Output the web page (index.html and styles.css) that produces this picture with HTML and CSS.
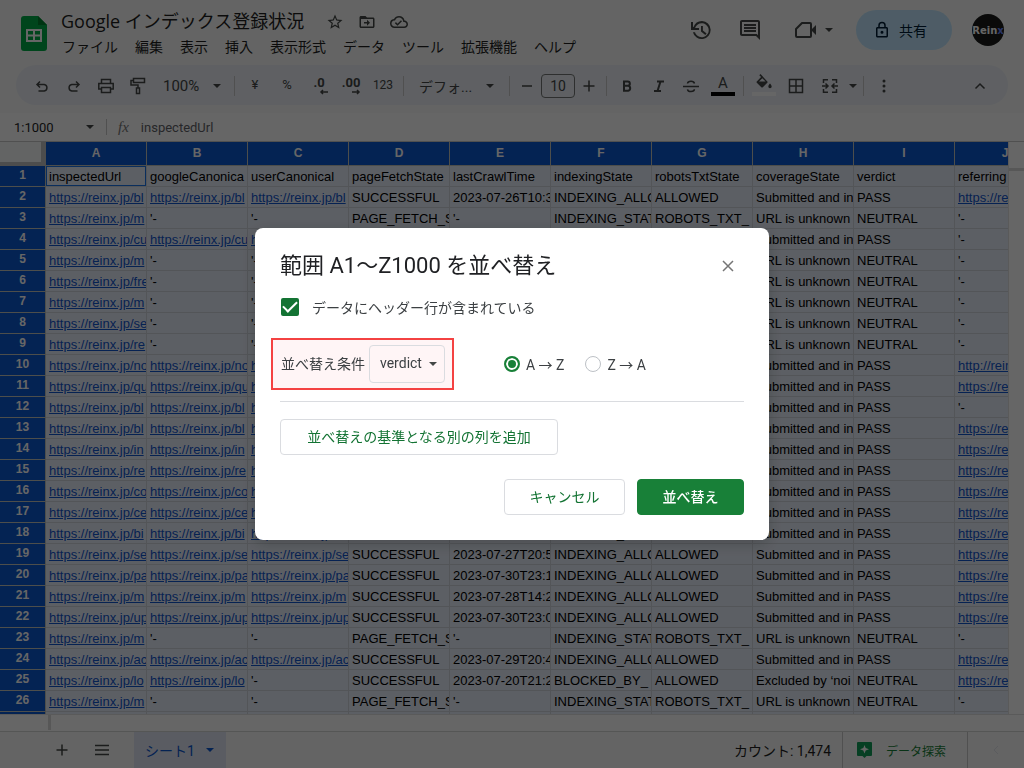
FILE: index.html
```html
<!DOCTYPE html>
<html lang="ja">
<head>
<meta charset="utf-8">
<meta name="viewport" content="width=device-width, initial-scale=1">
<title>Google インデックス登録状況</title>
<link rel="stylesheet" href="styles.css">
</head>
<body>
<div class="app">
  <header class="header">
    <svg class="logo" viewBox="0 0 26 35"><path fill="#00ac47" d="M3 0h14l9 9v23a3 3 0 0 1-3 3H3a3 3 0 0 1-3-3V3a3 3 0 0 1 3-3z"/><path fill="#00832d" d="M17 0l9 9h-9z"/><path fill="#fff" fill-rule="evenodd" d="M5 13h16v13H5zM7 15v3.500h5V15zM14 15v3.500h5V15zM7 20.500V24h5v-3.500zM14 20.500V24h5v-3.500z"/></svg>
    <div class="doc">
      <div class="doc-row">
        <h1 class="doc-title">Google インデックス登録状況</h1>
        <div class="doc-icons">
          <button class="mini" aria-label="スター"><svg viewBox="0 0 24 24"><path d="M22 9.240l-7.190-.620L12 2 9.190 8.630 2 9.240l5.460 4.730L5.820 21 12 17.270 18.180 21l-1.630-7.030L22 9.240zM12 15.400l-3.760 2.270 1-4.280-3.320-2.880 4.380-.380L12 6.100l1.710 4.040 4.380.380-3.320 2.880 1 4.280L12 15.400z"/></svg></button>
          <button class="mini" aria-label="移動"><svg viewBox="0 0 24 24"><path d="M20 6h-8l-2-2H4c-1.100 0-2 .9-2 2v12c0 1.100.9 2 2 2h16c1.100 0 2-.9 2-2V8c0-1.100-.9-2-2-2zm0 12H4V8h16v10zm-8-1l4-4-4-4v3H8v2h4z"/></svg></button>
          <button class="mini" aria-label="保存状況"><svg viewBox="0 0 24 24"><path d="M19.350 10.040A7.490 7.490 0 0 0 12 4C9.110 4 6.600 5.640 5.350 8.040A5.994 5.994 0 0 0 0 14c0 3.310 2.690 6 6 6h13c2.760 0 5-2.240 5-5 0-2.640-2.050-4.780-4.650-4.960zM19 18H6c-2.210 0-4-1.790-4-4 0-2.050 1.530-3.760 3.560-3.970l1.070-.110.5-.950A5.469 5.469 0 0 1 12 6c2.620 0 4.880 1.860 5.390 4.430l.3 1.500 1.530.110A2.980 2.980 0 0 1 22 15c0 1.650-1.350 3-3 3zM10 14.200l-2.100-2.100-1.400 1.400L10 17l6-6-1.400-1.400z"/></svg></button>
        </div>
      </div>
      <nav class="menus">
        <button>ファイル</button><button>編集</button><button>表示</button><button>挿入</button><button>表示形式</button><button>データ</button><button>ツール</button><button>拡張機能</button><button>ヘルプ</button>
      </nav>
    </div>
    <div class="actions">
      <button class="big" aria-label="変更履歴"><svg viewBox="0 0 24 24"><path d="M13 3a9 9 0 0 0-8.500 6H4V4H2v8h8v-2H6.100A7 7 0 1 1 6 14.200H3.900A9 9 0 1 0 13 3zm-1 5v5.400l4.300 3.600 1.300-1.500-3.700-3V8z"/></svg></button>
      <button class="big" aria-label="コメント"><svg viewBox="0 0 24 24"><path d="M21.990 4c0-1.100-.890-2-1.990-2H4c-1.100 0-2 .9-2 2v12c0 1.100.9 2 2 2h14l4 4-.010-18zM20 4v13.170L18.830 16H4V4h16zM6 12h12v2H6zm0-3h12v2H6zm0-3h12v2H6z"/></svg></button>
      <button class="meet" aria-label="通話"><svg class="camera" viewBox="0 0 24 20"><path fill="none" stroke="#444746" stroke-width="2" stroke-linejoin="round" d="M8 3h8a1 1 0 0 1 1 1v12a1 1 0 0 1-1 1H3a1 1 0 0 1-1-1V9z"/><path d="M17 10l5-5v10z"/></svg><span class="caret"></span></button>
      <button class="share"><svg viewBox="0 0 24 24"><path d="M18 8h-1V6A5 5 0 0 0 7 6v2H6c-1.100 0-2 .9-2 2v10c0 1.100.9 2 2 2h12c1.100 0 2-.9 2-2V10c0-1.100-.9-2-2-2zM9 6a3 3 0 0 1 6 0v2H9zm9 14H6V10h12zm-6-3a2 2 0 1 0 0-4 2 2 0 0 0 0 4z"/></svg>共有</button>
      <button class="avatar" aria-label="アカウント">Rein<b>x</b></button>
    </div>
  </header>

  <div class="toolbar" role="toolbar">
    <button class="tool" aria-label="元に戻す"><svg viewBox="0 0 18 18"><path class="line" d="M7 4.500L4 7.500l3 3M4 7.500h7.200a3.300 3.300 0 0 1 0 6.500H5.500"/></svg></button>
    <button class="tool" aria-label="やり直し"><svg viewBox="0 0 18 18"><path class="line" d="M11 4.500l3 3-3 3M14 7.500H6.800a3.300 3.300 0 0 0 0 6.500h5.700"/></svg></button>
    <button class="tool" aria-label="印刷"><svg viewBox="0 0 18 18"><path class="line" d="M4.500 6V2.500h9V6M4.500 12H1.800V6.500h14.400V12h-2.700M4.500 10.500h9v5h-9z"/></svg></button>
    <button class="tool" aria-label="書式を貼り付け"><svg viewBox="0 0 18 18"><path class="line" d="M4.500 1.500h11v4h-11zM4.500 3.500H2V8h7v3M7.500 11h3v5.500h-3z"/></svg></button>
    <button class="zoom">100%<span class="caret"></span></button>
    <span class="sep"></span>
    <button class="tool num">¥</button>
    <button class="tool num">%</button>
    <button class="tool decimal" aria-label="小数点以下の桁数を減らす"><span>.0</span><svg viewBox="0 0 10 6"><path class="line" d="M9 3H2M4 1L2 3l2 2"/></svg></button>
    <button class="tool decimal" aria-label="小数点以下の桁数を増やす"><span>.00</span><svg viewBox="0 0 10 6"><path class="line" d="M1 3h7M6 1l2 2-2 2"/></svg></button>
    <button class="tool num small">123</button>
    <span class="sep"></span>
    <button class="font">デフォ...<span class="caret"></span></button>
    <span class="sep"></span>
    <button class="step" aria-label="小さく"><svg viewBox="0 0 18 18"><path class="line" d="M4 9h10"/></svg></button>
    <input class="size" aria-label="フォントサイズ" value="10">
    <button class="step" aria-label="大きく"><svg viewBox="0 0 18 18"><path class="line" d="M3.500 9h11M9 3.500v11"/></svg></button>
    <span class="sep"></span>
    <button class="tool" aria-label="太字"><svg viewBox="0 0 18 18"><path fill="none" stroke="#444746" stroke-width="2" d="M6 4.500h3.700a2.100 2.100 0 0 1 0 4.300H6.200h4a2.500 2.500 0 0 1 0 4.900H6V4.500z"/></svg></button>
    <button class="tool" aria-label="斜体"><svg viewBox="0 0 18 18"><path fill="none" stroke="#444746" stroke-width="2" d="M7 4.500h7M4 14h7M10.500 4.500L7.500 14"/></svg></button>
    <button class="tool" aria-label="取り消し線"><svg viewBox="0 0 18 18"><path class="line" d="M1 9.500h16M12.500 6.500c-.3-1.400-1.600-2.200-3.500-2.200s-3.300.8-3.500 2.200M5.500 12.300C5.700 13.800 7 14.500 9 14.500s3.400-.8 3.400-2.200"/></svg></button>
    <button class="tool color">A</button>
    <span class="sep"></span>
    <button class="tool fill" aria-label="塗りつぶしの色"><svg viewBox="0 0 18 18"><path d="M5.500 0L4.300 1.200l1.800 1.800-4.300 4.400a1 1 0 0 0 0 1.400l4.500 4.500c.4.400 1.100.4 1.500 0l4.500-4.500a1 1 0 0 0 0-1.400zM4 7.500l3.300-3.300 3.300 3.300zM15 9.500s-1.700 1.900-1.700 3a1.700 1.700 0 0 0 3.400 0c0-1.100-1.700-3-1.700-3z"/></svg></button>
    <button class="tool" aria-label="枠線"><svg viewBox="0 0 18 18"><path class="line" d="M2.500 2.500h13v13h-13zM9 2.500v13M2.500 9h13"/></svg></button>
    <button class="merge" aria-label="セルを結合"><svg viewBox="0 0 18 18"><path class="line" d="M7 2.800H2.500V6M11 2.800h4.500V6M7 15.200H2.500V12M11 15.200h4.500V12M1 9h5.500M4.500 6.500L7 9l-2.500 2.500M17 9h-5.500M13.500 6.500L11 9l2.500 2.500"/></svg><span class="caret"></span></button>
    <span class="sep"></span>
    <button class="tool" aria-label="その他"><svg viewBox="0 0 18 18"><circle cx="9" cy="4" r="1.500"/><circle cx="9" cy="9" r="1.500"/><circle cx="9" cy="14" r="1.500"/></svg></button>
    <button class="tool last" aria-label="メニューを非表示"><svg viewBox="0 0 18 18"><path class="line" d="M4.500 11.500L9 7l4.500 4.500"/></svg></button>
  </div>

  <div class="formula">
    <button class="range">1:1000<span class="caret"></span></button>
    <span class="sep"></span>
    <span class="fx">fx</span>
    <input class="formula-input" aria-label="数式" value="inspectedUrl">
  </div>

  <main class="sheet">
    <div class="grid-view">
      <table class="grid">
        <colgroup><col class="row-col"><col span="10" class="data-col"></colgroup>
        <thead><tr id="letters"><th class="corner" aria-label="すべて選択"></th></tr></thead>
        <tbody id="rows"></tbody>
      </table>
    </div>
    <div class="v-scroll"></div>
  </main>
  <div class="h-scroll"></div>

  <footer class="footer">
    <button class="foot" aria-label="シートを追加"><svg viewBox="0 0 18 18"><path class="line" d="M3.500 9h11M9 3.500v11"/></svg></button>
    <button class="foot" aria-label="すべてのシート"><svg viewBox="0 0 18 18"><path class="line" d="M2 4.500h14M2 9h14M2 13.500h14"/></svg></button>
    <button class="tab">シート1<span class="caret"></span></button>
    <button class="count">カウント: 1,474</button>
    <button class="explore"><svg viewBox="0 0 16 17"><path fill="#0f9d58" d="M1 0h13a1 1 0 0 1 1 1v12a1 1 0 0 1-1 1H9.500L7.500 16l-2-2H1a1 1 0 0 1-1-1V1a1 1 0 0 1 1-1z"/><path fill="#fff" d="M7.500 3l1.200 3L12 7.200 8.700 8.500l-1.200 3-1.200-3L3 7.200 6.300 6z"/></svg>データ探索</button>
    <button class="panel" aria-label="サイドパネルを表示"><svg viewBox="0 0 18 18"><path d="M11 5L7 9l4 4"/></svg></button>
  </footer>
</div>

<div class="backdrop">
  <section class="dialog" role="dialog" aria-labelledby="dialog-title">
    <div class="dialog-head">
      <h2 class="dialog-title" id="dialog-title">範囲 A1～Z1000 を並べ替え</h2>
      <button class="close" aria-label="閉じる"><svg viewBox="0 0 16 16"><path d="M3 3l10 10M13 3L3 13"/></svg></button>
    </div>
    <label class="check"><input type="checkbox" checked>データにヘッダー行が含まれている</label>
    <div class="criteria">
      <div class="highlight">
        <label for="column">並べ替え条件</label>
        <div class="select"><select id="column"><option>verdict</option></select><span class="caret"></span></div>
      </div>
      <div class="order">
        <label class="radio"><input type="radio" name="order" checked>A → Z</label>
        <label class="radio"><input type="radio" name="order">Z → A</label>
      </div>
    </div>
    <button class="btn add">並べ替えの基準となる別の列を追加</button>
    <div class="buttons">
      <button class="btn cancel">キャンセル</button>
      <button class="btn primary">並べ替え</button>
    </div>
  </section>
</div>
<script src="script.js"></script>
</body>
</html>
```

FILE: styles.css
```css
* { box-sizing: border-box; }

body {
  margin: 0;
  font-family: Roboto, "Noto Sans CJK JP", sans-serif;
  font-size: 14px;
  color: #1f1f1f;
}

button, input, select {
  font: inherit;
  color: inherit;
  border: 0;
  padding: 0;
  margin: 0;
  background: none;
}

svg { display: block; fill: #444746; }
.line { fill: none; stroke: #444746; stroke-width: 1.5; }

.app {
  display: flex;
  flex-direction: column;
  height: 100vh;
  overflow: hidden;
  background: #f9fbf9;
}

.caret {
  width: 0;
  border: 4px solid transparent;
  border-top-color: #444746;
  border-bottom: 0;
}

.sep { width: 1px; height: 20px; background: #c7c7c7; flex: none; }

/* header */
.header { display: flex; flex: none; height: 65px; padding: 0 20px 0 21px; }
.logo { width: 26px; height: 35px; margin-top: 16px; flex: none; }
.doc { margin-left: 14px; padding-top: 8px; }
.doc-row { display: flex; align-items: center; height: 26px; }
.doc-title { margin: 0; font-family: "Open Sans", "Noto Sans CJK JP", sans-serif; font-size: 18px; font-weight: 400; line-height: 26px; white-space: nowrap; }
.doc-icons { display: flex; gap: 14px; margin-left: 22px; padding-top: 2px; }
.mini svg { width: 18px; height: 18px; }
.menus { display: flex; gap: 17px; padding: 3px 0 0 1px; line-height: 20px; white-space: nowrap; }
.actions { display: flex; align-items: center; height: 60px; margin-left: auto; }
.big { margin-right: 25px; }
.big svg { width: 24px; height: 24px; }
.meet { display: flex; align-items: center; gap: 7px; margin: 0 23px 0 7px; }
.camera { width: 24px; height: 20px; }
.share {
  display: flex;
  align-items: center;
  justify-content: center;
  gap: 8px;
  width: 96px;
  height: 40px;
  margin-right: 20px;
  padding-right: 8px;
  border-radius: 20px;
  background: #c2e7ff;
  color: #001d35;
}
.share svg { width: 18px; height: 18px; fill: #001d35; }
.avatar {
  width: 32px;
  height: 32px;
  border-radius: 16px;
  background: #1a1a1a;
  color: #fff;
  font: bold 10px "DejaVu Sans", sans-serif;
}
.avatar b { color: #6688ff; }

/* toolbar */
.toolbar {
  display: flex;
  align-items: center;
  flex: none;
  height: 40px;
  margin: 0 16px 8px;
  padding: 1px 12px 0 10px;
  border-radius: 20px;
  background: #edf0f8;
  color: #444746;
}
.tool { display: flex; align-items: center; justify-content: center; width: 32px; height: 32px; flex: none; }
.tool svg, .step svg, .foot svg { width: 18px; height: 18px; }
.zoom { display: flex; align-items: center; justify-content: space-between; width: 58px; margin: 0 13px 0 9px; font-size: 15px; }
.toolbar .sep { margin: 0 4px; }
.zoom + .sep { margin-left: 0; }
.num { padding-bottom: 2px; font-size: 13px; }
.small { font-size: 12px; }
.tool.decimal { flex-direction: column; font-size: 13px; font-weight: 700; line-height: 12px; }
.tool.decimal svg { width: 10px; height: 6px; align-self: flex-end; margin-right: 6px; }
.font { display: flex; align-items: center; justify-content: space-between; width: 97px; padding: 0 11px; white-space: nowrap; }
.step { display: flex; justify-content: center; width: 26px; }
.size { width: 34px; height: 24px; margin: 0 1px; border: 1px solid #747775; border-radius: 4px; text-align: center; }
.color { position: relative; font-size: 15px; padding-bottom: 6px; }
.color::after, .fill::after {
  content: "";
  position: absolute;
  left: 4px;
  right: 4px;
  bottom: 6px;
  height: 4px;
  background: #000;
}
.fill { position: relative; padding-bottom: 6px; }
.fill::after { background: #fff; }
.merge { display: flex; align-items: center; justify-content: space-between; width: 47px; padding: 0 2px 0 9px; }
.merge svg { width: 18px; height: 18px; }
.last { margin-left: auto; }

/* formula bar */
.formula { display: flex; align-items: center; flex: none; height: 28px; background: #fff; font-size: 13px; }
.range { display: flex; align-items: center; justify-content: space-between; width: 106px; padding: 0 12px 0 14px; }
.formula .sep { height: 16px; }
.fx { margin: 0 12px 0 11px; font: italic 15px "Liberation Serif", serif; color: #777; }
.formula-input { flex: 1; color: #5f6368; }

/* sheet */
.sheet { display: flex; flex: 1; min-height: 0; background: #fff; border-top: 1px solid #c7c7c7; }
.grid-view { flex: 1; min-width: 0; overflow: hidden; }
.grid {
  width: 1056px;
  table-layout: fixed;
  border-collapse: separate;
  border-spacing: 0;
  font-family: "Liberation Sans", sans-serif;
  font-size: 13px;
  background: #e7eefa;
}
.row-col { width: 46px; }
.data-col { width: 101px; }
.grid th, .grid td {
  height: 21px;
  padding: 2px 0 0 3px;
  border-right: 1px solid #d0d5dd;
  border-bottom: 1px solid #d0d5dd;
  line-height: 18px;
  white-space: nowrap;
  overflow: hidden;
  color: #000;
}
.grid th { padding: 0; background: #0b57d0; color: #fff; border-color: #c0c4bc; font-size: 12px; line-height: 18px; text-align: center; vertical-align: top; }
.grid thead th { height: 24px; line-height: 23px; }
.grid .corner { background: #f8f9fa; border-right: 5px solid #c0c0c0; border-bottom: 4px solid #c0c0c0; }
.grid a { color: #1155cc; }
.grid .active { box-shadow: inset 0 0 0 1px #1a73e8; }
.v-scroll { width: 16px; background: #fff; border-left: 1px solid #e0e0e0; }
.v-scroll::before { content: ""; display: block; height: 26px; border-bottom: 3px solid #d9d9d9; }
.h-scroll { flex: none; height: 17px; background: #fff; border-top: 1px solid #e0e0e0; }
.h-scroll::before { content: ""; display: block; width: 48px; height: 15px; border-right: 3px solid #d9d9d9; }

/* footer */
.footer { display: flex; flex: none; height: 37px; padding-left: 42px; border-top: 1px solid #d5d7d5; }
.foot { display: flex; align-items: center; justify-content: center; width: 40px; }
.tab { display: flex; align-items: center; justify-content: space-between; width: 92px; margin-left: 12px; padding: 0 12px 0 11px; background: #e1e6f4; color: #0b57d0; }
.tab .caret { border-top-color: #0b57d0; }
.count { margin-left: auto; padding-right: 11px; }
.explore { display: flex; align-items: center; gap: 13px; width: 126px; padding-left: 14px; border: 1px solid #c7c7c7; border-width: 0 1px; color: #188038; font-size: 12px; }
.explore svg { width: 16px; height: 17px; }
.panel { display: flex; align-items: center; justify-content: center; width: 56px; }
.panel svg { width: 18px; height: 18px; fill: none; stroke: #e4e6ee; }

/* dialog */
.backdrop {
  position: fixed;
  inset: 0;
  display: flex;
  align-items: center;
  justify-content: center;
  background: rgba(0, 0, 0, 0.6);
}
.dialog { width: 514px; padding: 24px 25px 25px; border-radius: 8px; background: #fff; box-shadow: 0 4px 16px rgba(0, 0, 0, 0.2); }
.dialog-head { display: flex; align-items: center; justify-content: space-between; height: 28px; }
.dialog-title { margin: 0; font-size: 22px; font-weight: 400; line-height: 28px; color: #202124; }
.close { padding: 0 8px; }
.close svg { width: 16px; height: 16px; fill: none; stroke: #757575; stroke-width: 1.5; }
.check { display: flex; align-items: center; gap: 13px; height: 20px; margin: 17px 0 0 1px; color: #3c4043; }
.check input {
  appearance: none;
  display: grid;
  place-items: center;
  width: 18px;
  height: 18px;
  border-radius: 2px;
  background: #137333;
}
.check input::after {
  content: "";
  width: 12px;
  height: 6px;
  margin-bottom: 4px;
  border: solid #fff;
  border-width: 0 0 2px 2px;
  transform: rotate(-45deg);
}
.criteria { display: flex; align-items: center; margin: 21px 0 17px; padding-bottom: 11px; border-bottom: 1px solid #dadce0; color: #3c4043; }
.highlight {
  display: flex;
  align-items: center;
  gap: 4px;
  height: 52px;
  margin-left: -9px;
  padding: 0 7px 0 8px;
  border: 2px solid #f44242;
  background: #fff5f6;
}
.highlight label { padding-bottom: 2px; }
.select { display: grid; align-items: center; width: 76px; height: 38px; border: 1px solid #dadce0; border-radius: 4px; }
.select select { grid-area: 1 / 1; width: 74px; height: 36px; padding: 0 0 2px 10px; appearance: none; }
.select .caret { grid-area: 1 / 1; justify-self: end; margin-right: 7px; pointer-events: none; }
.order { display: flex; gap: 21px; margin-left: 50px; }
.radio { display: flex; align-items: center; gap: 6px; white-space: nowrap; }
.radio input { appearance: none; width: 16px; height: 16px; border: 1px solid #bdc1c6; border-radius: 8px; }
.radio input:checked { border: 2px solid #188038; background: #188038; box-shadow: inset 0 0 0 2px #fff; }
.btn { height: 36px; padding: 0 23px 2px; border: 1px solid #dadce0; border-radius: 4px; color: #137333; }
.primary { min-width: 107px; border-color: #188038; background: #188038; color: #fff; font-weight: 500; }
.cancel { min-width: 121px; }
.add { display: block; min-width: 278px; }
.buttons { display: flex; justify-content: flex-end; gap: 12px; margin-top: 24px; }
```

FILE: script.js
```js
const headers = ["inspectedUrl", "googleCanonica", "userCanonical", "pageFetchState", "lastCrawlTime",
  "indexingState", "robotsTxtState", "coverageState", "verdict", "referring"];

// path, crawl time (empty when unknown), referring URL, overrides
const pages = [
  ["bl", "26T10:3", "https://re"],
  ["m", "", ""],
  ["cu", "27T10:1", ""],
  ["m", "", ""],
  ["fre", "", ""],
  ["m", "", ""],
  ["se", "", ""],
  ["re", "", ""],
  ["no", "27T10:2", "http://rein"],
  ["qu", "27T11:2", "https://re"],
  ["bl", "28T12:2", ""],
  ["bl", "28T09:2", "https://re"],
  ["in", "28T10:2", "https://re"],
  ["re", "29T10:2", "https://re"],
  ["co", "29T11:2", "https://re"],
  ["ce", "29T12:2", "https://re"],
  ["bi", "30T10:2", "https://re"],
  ["se", "27T20:5", "https://re"],
  ["pa", "30T23:1", "https://re"],
  ["m", "28T14:2", "https://re"],
  ["up", "30T23:0", "https://re"],
  ["m", "", ""],
  ["ac", "29T20:4", "https://re"],
  ["lo", "20T21:2", "https://re", "blocked"],
  ["m", "", ""],
  ["", "", ""]
];

function link(url) {
  const a = document.createElement("a");
  a.href = "#";
  a.textContent = url;
  return a;
}

function toCells([path, time, ref, state]) {
  if (!path) return Array(10).fill("");
  const url = () => link("https://reinx.jp/" + path);
  const none = "'-";
  const blocked = state === "blocked";
  return [
    url(),
    time ? url() : none,
    time && !blocked ? url() : none,
    time ? "SUCCESSFUL" : "PAGE_FETCH_S",
    time ? "2023-07-" + time : none,
    blocked ? "BLOCKED_BY_" : time ? "INDEXING_ALLO" : "INDEXING_STAT",
    time ? "ALLOWED" : "ROBOTS_TXT_",
    blocked ? "Excluded by ‘noi" : time ? "Submitted and in" : "URL is unknown",
    time && !blocked ? "PASS" : "NEUTRAL",
    ref ? link(ref) : none
  ];
}

const letters = document.getElementById("letters");
for (const letter of "ABCDEFGHIJ") {
  const th = document.createElement("th");
  th.textContent = letter;
  letters.append(th);
}

const body = document.getElementById("rows");
[headers, ...pages.map(toCells)].forEach((cells, i) => {
  const row = body.insertRow();
  const th = document.createElement("th");
  th.textContent = i < 26 ? i + 1 : "";
  row.append(th);
  cells.forEach(content => row.insertCell().append(content));
});
body.rows[0].cells[1].className = "active";
```
